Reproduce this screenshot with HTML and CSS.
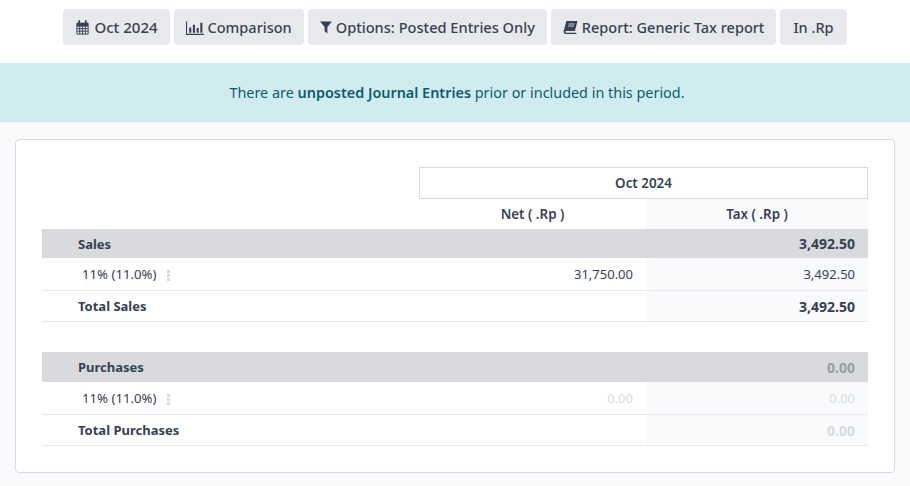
FILE: index.html
```html
<!DOCTYPE html>
<html lang="en">
<head>
<meta charset="utf-8">
<title>Generic Tax report</title>
<link rel="stylesheet" href="styles.css">
</head>
<body>
<div class="toolbar">
  <button class="btn btn-date"><svg class="ico" viewBox="0 0 14 16"><path d="M1 3.500h12v11.500H1z M1 6.500h12 M1 9.200h12 M1 11.900h12 M4 6.500V15 M7 6.500V15 M10 6.500V15" fill="none" stroke="currentColor" stroke-width="1"/><path d="M1 3h12v3.500H1z" fill="currentColor"/><path d="M3.500 1v3.500M10.500 1v3.500" stroke="currentColor" stroke-width="1.800" stroke-linecap="round"/></svg>Oct 2024</button>
  <button class="btn"><svg class="ico wide" viewBox="0 0 17 14"><path d="M.5 1v12.500H17" fill="none" stroke="currentColor"/><path d="M3 7h2v5H3zM6.500 4.500h2V12h-2zM10 7.500h2V12h-2zM13.500 2.500h2V12h-2z" fill="currentColor"/></svg>Comparison</button>
  <button class="btn btn-opt"><svg class="ico narrow" viewBox="0 0 12 14"><path d="M0 1h12L7.400 6.600V13L4.600 10.800V6.600z" fill="currentColor"/></svg>Options: Posted Entries Only</button>
  <button class="btn"><svg class="ico" viewBox="0 0 15 14"><path d="M4 .5h10.500l-2.600 10H3.200c-.9 0-1 1.800 0 1.800h10.300l-.3 1.200H2.800C1 13.500.3 12 .8 10.200L3 1.700C3.200 1 3.400.5 4 .5z" fill="currentColor"/><path d="M5.500 3.500h6M5 5.500h6" stroke="#e7e9ed" stroke-width=".8"/></svg>Report: Generic Tax report</button>
  <button class="btn btn-cur">In .Rp</button>
</div>
<div class="alert">There are <strong>unposted Journal Entries</strong> prior or included in this period.</div>
<main class="content">
  <section class="card">
    <table class="report">
      <colgroup><col class="c-label"><col class="c-net"><col class="c-tax"></colgroup>
      <thead>
        <tr class="h1"><th></th><th colspan="2" class="period">Oct 2024</th></tr>
        <tr class="h2"><th></th><th>Net ( .Rp )</th><th class="shade">Tax ( .Rp )</th></tr>
      </thead>
      <tbody>
        <tr class="group r-sales"><td class="name">Sales</td><td></td><td class="num">3,492.50</td></tr>
        <tr class="line"><td class="name"><span class="tag">11% (11.0%)</span><i class="dots"></i></td><td class="num">31,750.00</td><td class="num shade">3,492.50</td></tr>
        <tr class="total"><td class="name">Total Sales</td><td></td><td class="num shade">3,492.50</td></tr>
        <tr class="gap"><td colspan="3"></td></tr>
        <tr class="group r-purch"><td class="name">Purchases</td><td></td><td class="num zero-g">0.00</td></tr>
        <tr class="line"><td class="name"><span class="tag">11% (11.0%)</span><i class="dots"></i></td><td class="num zero">0.00</td><td class="num shade zero">0.00</td></tr>
        <tr class="total"><td class="name">Total Purchases</td><td></td><td class="num shade zero">0.00</td></tr>
      </tbody>
    </table>
  </section>
</main>
</body>
</html>
```
FILE: styles.css
```css
* { box-sizing: border-box; }
html, body { margin: 0; padding: 0; height: 100%; }
body {
  font-family: "Noto Sans", sans-serif;
  font-size: 13px;
  color: #374151;
  background: #f9fafb;
  overflow: hidden;
}
.toolbar {
  background: #fff;
  height: 63px;
  padding-top: 9px;
  display: flex;
  justify-content: center;
  align-items: flex-start;
  gap: 4px;
}
.btn {
  font: 500 14.5px "Noto Sans", sans-serif;
  color: #374151;
  height: 36px;
  padding: 0 12px;
  background: #e7e9ed;
  border: 0;
  border-radius: 4px;
  display: flex;
  align-items: center;
  gap: 4px;
  white-space: nowrap;
}
.btn-date { font-size: 15px; }
.btn-opt { font-size: 14.6px; }
.btn-cur { padding: 0 13px; }
.ico { width: 15px; height: 15px; flex: none; }
.ico.wide { width: 18px; }
.ico.narrow { width: 12px; }
.alert {
  height: 59px;
  line-height: 60px;
  padding-left: 4px;
  background: #d0ecf1;
  color: #0e5c6b;
  font-size: 14.4px;
  text-align: center;
  white-space: nowrap;
}
.alert strong { font-weight: 600; }
.content { padding: 17px 15px 0; }
.card {
  height: 334px;
  background: #fff;
  border: 1px solid #d8dadd;
  border-radius: 4px;
  padding: 27px 26px 0;
}
.report {
  width: 826px;
  border-collapse: separate;
  border-spacing: 0;
  table-layout: fixed;
}
.c-label { width: 377px; }
.c-net { width: 227px; }
.c-tax { width: 222px; }
th, td { padding: 0; font-size: 13px; }
th { font-weight: 600; font-size: 13.4px; text-align: center; }
.h1 { height: 32px; }
.h1 .period { border: 1px solid #d8dadd; }
.h2 { height: 30px; }
.shade { background: #f9fafb; }
.name { padding-left: 36px; }
.num { text-align: right; padding-right: 13px; }
.group { background: #d8dadd; }
.group td { font-weight: 700; }
.group .num, .total .num { font-size: 14px; }
.r-sales { height: 29px; }
.r-purch { height: 30px; }
.line { height: 33px; }
.line td { border-bottom: 1px solid #e7e9ed; }
.line .name { padding-left: 40px; }
.tag { font-size: 13.2px; }
.dots {
  display: inline-block;
  width: 3px;
  height: 11px;
  margin-left: 10px;
  vertical-align: -2px;
  background: repeating-linear-gradient(#d8dadd 0 3px, transparent 3px 4px);
}
.total { height: 31px; }
.total td { font-weight: 700; border-bottom: 1px solid #e7e9ed; }
.gap { height: 30px; }
.zero { color: #d8dadd; }
.total .zero { color: #d8dadd; }
.zero-g { color: #9a9ca5; }
```
